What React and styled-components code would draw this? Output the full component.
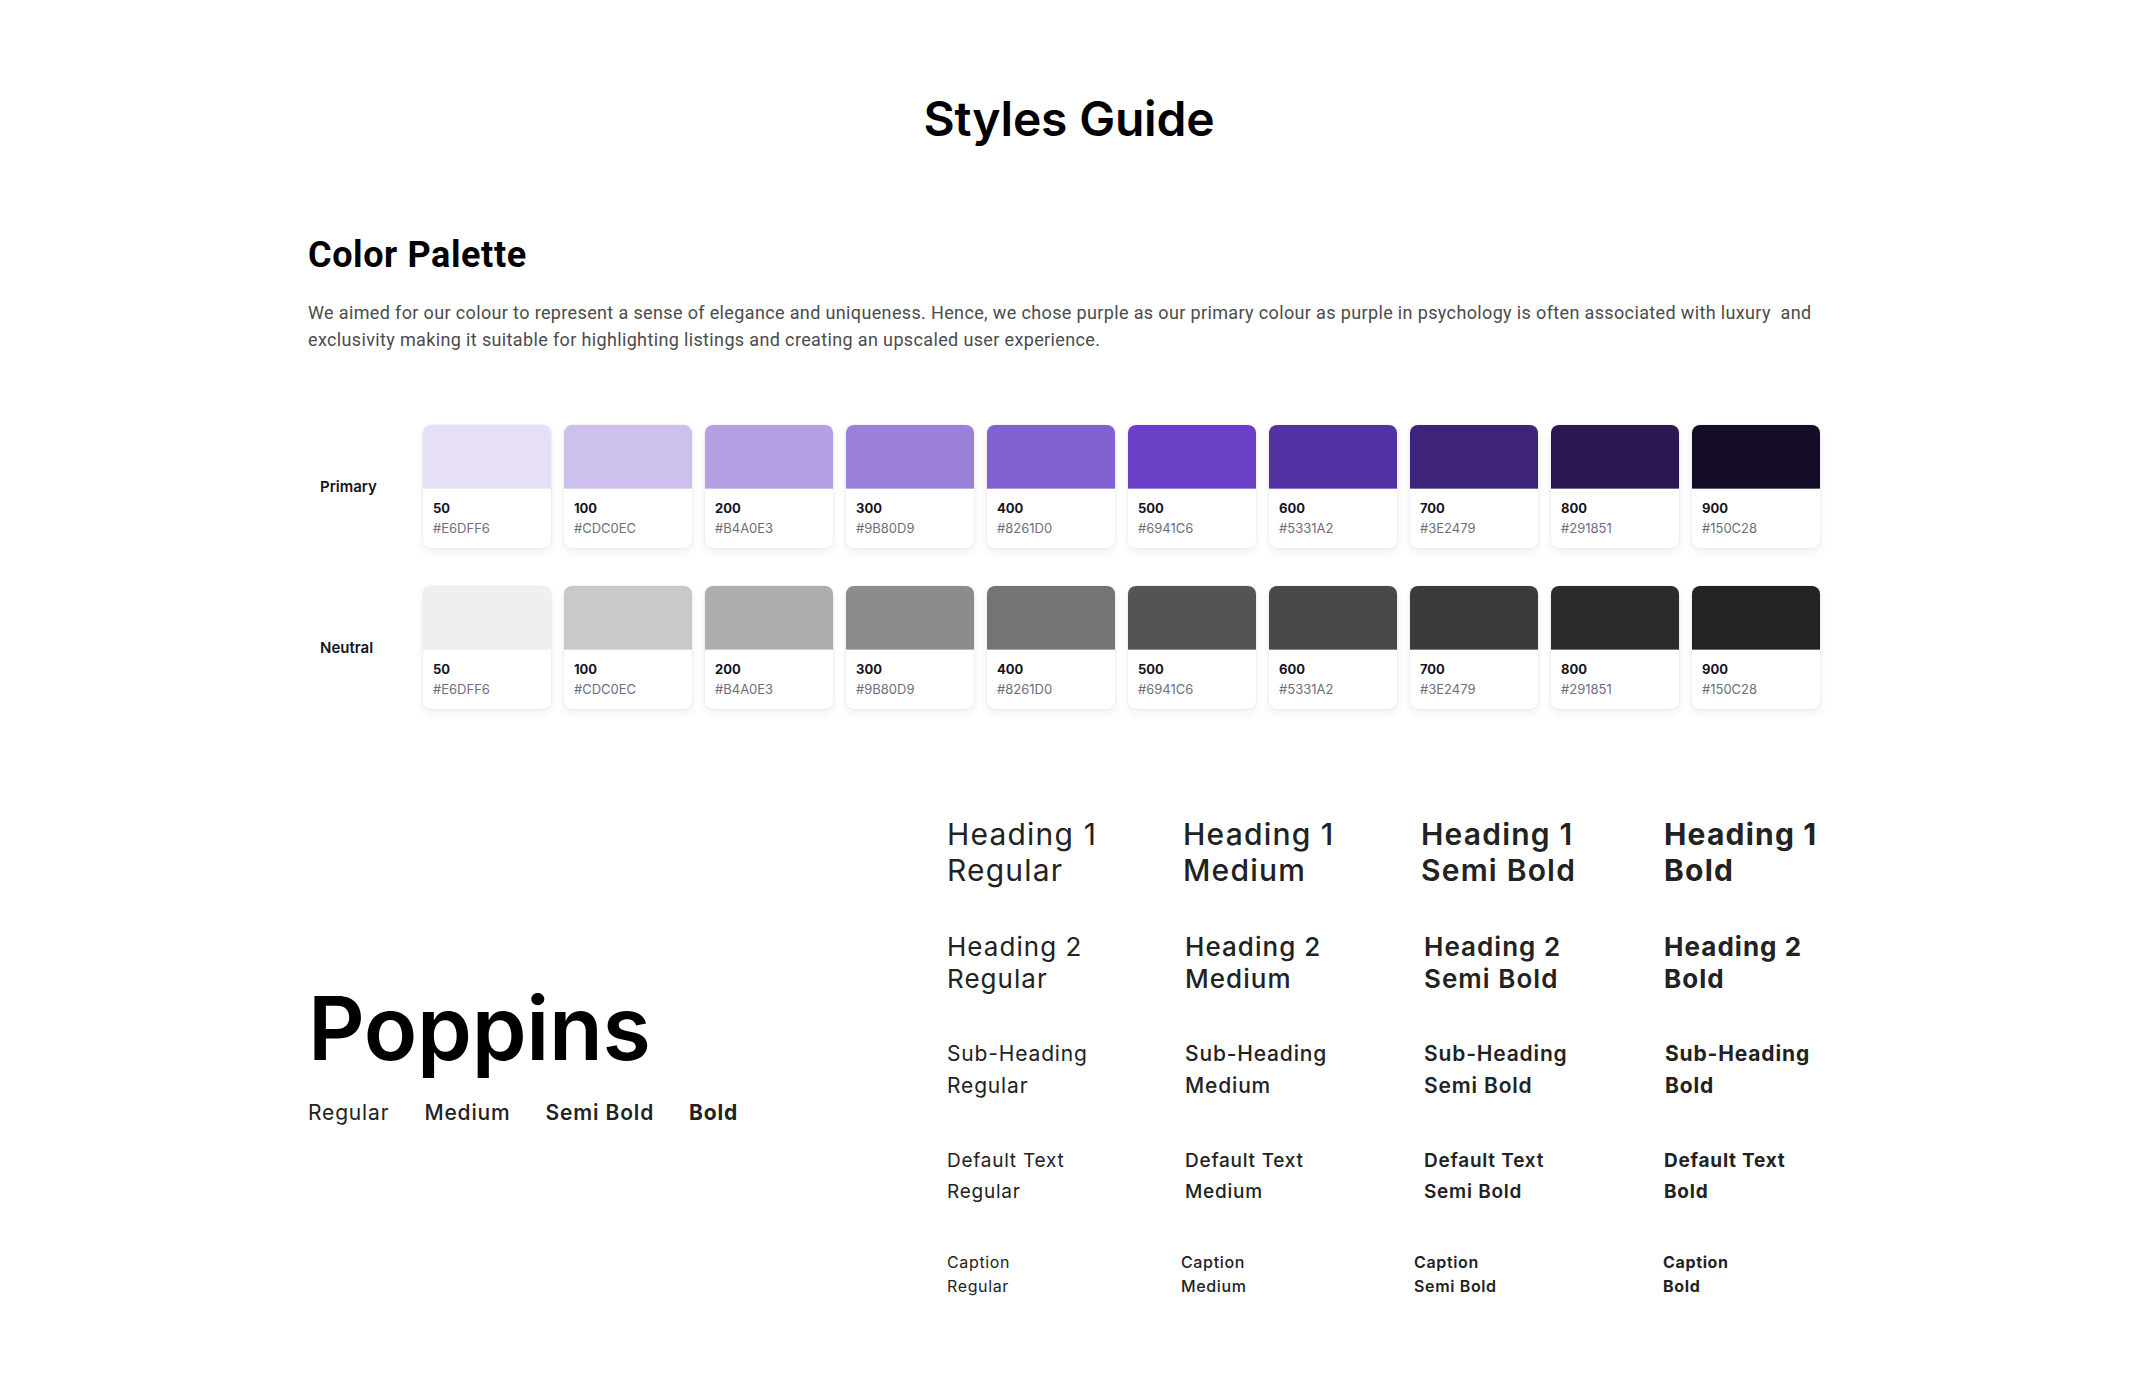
import React from "react";
import styled, { createGlobalStyle } from "styled-components";

const Global = createGlobalStyle`
  html, body { margin: 0; padding: 0; background: #ffffff; }
  body { font-family: "Inter", "Roboto", sans-serif; -webkit-font-smoothing: antialiased; }
  * { box-sizing: border-box; }
`;

const Page = styled.div`
  width: 2138px;
  min-height: 1397px;
  padding-top: 90px;
  padding-bottom: 100px;
`;

const Title = styled.h1`
  margin: 0;
  text-align: center;
  font-family: "Inter", sans-serif;
  font-weight: 600;
  font-size: 48px;
  line-height: 57.6px;
  color: #000;
  letter-spacing: -0.2px;
`;

const Container = styled.main`
  width: 1512px;
  margin-left: 308px;
`;

const SectionTitle = styled.h2`
  margin: 85px 0 0;
  font-family: "Roboto", sans-serif;
  font-weight: 700;
  font-size: 36px;
  line-height: 44px;
  letter-spacing: 0.6px;
  color: #000;
`;

const Lead = styled.p`
  margin: 22px 0 0;
  font-family: "Roboto", sans-serif;
  font-size: 18px;
  line-height: 27px;
  letter-spacing: 0.36px;
  color: #4b4b4b;
  white-space: nowrap;
`;

const Palette = styled.div`
  margin-top: 72px;
  display: flex;
  flex-direction: column;
  gap: 38px;
`;

const PaletteRow = styled.div`
  display: grid;
  grid-template-columns: 102px repeat(10, 1fr);
  column-gap: 13px;
  align-items: center;
`;

const RowLabel = styled.div`
  padding-left: 12px;
  font-family: "Inter", sans-serif;
  font-weight: 600;
  font-size: 15px;
  color: #14141f;
`;

const Card = styled.div`
  background: #fff;
  border-radius: 8px;
  overflow: hidden;
  box-shadow: 0 0 0 1px rgba(16, 24, 40, 0.035), 0 4px 8px rgba(16, 24, 40, 0.07);
`;

const Swatch = styled.div`
  height: 64px;
  background: ${(p) => p.$color};
  border-bottom: 1px solid rgba(255, 255, 255, 0.35);
`;

const CardBody = styled.div`
  padding: 9px 10px 10px;
  font-family: "Inter", sans-serif;
  font-size: 13px;
  line-height: 20px;
`;

const Step = styled.div`
  font-weight: 700;
  color: #14141f;
`;

const Hex = styled.div`
  font-weight: 400;
  color: #6e6e80;
`;

const Typography = styled.section`
  margin-top: 107px;
  display: flex;
  align-items: flex-start;
`;

const FontShowcase = styled.div`
  width: 639px;
  flex-shrink: 0;
  margin-top: 168px;
`;

const FontName = styled.div`
  font-family: "Inter", sans-serif;
  font-weight: 600;
  font-size: 88px;
  line-height: 88px;
  color: #000;
  letter-spacing: -0.3px;
`;

const WeightList = styled.div`
  margin-top: 27px;
  display: flex;
  gap: 35px;
`;

const WeightName = styled.span`
  font-family: "Inter", sans-serif;
  font-size: 21px;
  line-height: 28px;
  letter-spacing: 0.04em;
  font-weight: ${(p) => p.$weight};
  color: #222;
`;

const Scale = styled.div`
  display: grid;
  grid-template-columns: 238px 239px 240px auto;
  row-gap: 43px;
`;

const Sample = styled.div`
  margin-left: ${(p) => p.$shift || 0}px;
  font-family: "Inter", sans-serif;
  font-size: ${(p) => p.$size}px;
  line-height: ${(p) => p.$lh}px;
  font-weight: ${(p) => p.$weight};
  letter-spacing: 0.04em;
  color: #222;
`;

const primary = [
  ["50", "#E6DFF6", "#E6DFF6"],
  ["100", "#CDC0EC", "#CDC0EC"],
  ["200", "#B4A0E3", "#B4A0E3"],
  ["300", "#9B80D9", "#9B80D9"],
  ["400", "#8261D0", "#8261D0"],
  ["500", "#6941C6", "#6941C6"],
  ["600", "#5331A2", "#5331A2"],
  ["700", "#3E2479", "#3E2479"],
  ["800", "#291851", "#291851"],
  ["900", "#150C28", "#150C28"],
];

const neutralFills = [
  "#EFEFEF",
  "#C9C9C9",
  "#ADADAD",
  "#8C8C8C",
  "#747474",
  "#545454",
  "#484848",
  "#3A3B3A",
  "#2B2B2B",
  "#232323",
];

const neutral = primary.map(([step, hex], i) => [step, hex, neutralFills[i]]);

const weights = [
  ["Regular", 400],
  ["Medium", 500],
  ["Semi Bold", 600],
  ["Bold", 700],
];

const styles = [
  ["Heading 1", 30, 36, [0, -2, -3, 0]],
  ["Heading 2", 26, 32, [0, 0, 0, 0]],
  ["Sub-Heading", 21, 32, [0, 0, 0, 1]],
  ["Default Text", 19, 31, [0, 0, 0, 0]],
  ["Caption", 16, 24, [0, -4, -10, -1]],
];

function Row({ label, items }) {
  return (
    <PaletteRow>
      <RowLabel>{label}</RowLabel>
      {items.map(([step, hex, fill]) => (
        <Card key={step}>
          <Swatch $color={fill} />
          <CardBody>
            <Step>{step}</Step>
            <Hex>{hex}</Hex>
          </CardBody>
        </Card>
      ))}
    </PaletteRow>
  );
}

export default function App() {
  return (
    <>
      <Global />
      <Page>
        <Title>Styles Guide</Title>
        <Container>
          <SectionTitle>Color Palette</SectionTitle>
          <Lead>
            We aimed for our colour to represent a sense of elegance and uniqueness. Hence, we chose purple as our primary colour as purple in psychology is often associated with luxury&nbsp; and
            <br />
            exclusivity making it suitable for highlighting listings and creating an upscaled user experience.
          </Lead>
          <Palette>
            <Row label="Primary" items={primary} />
            <Row label="Neutral" items={neutral} />
          </Palette>
          <Typography>
            <FontShowcase>
              <FontName>Poppins</FontName>
              <WeightList>
                {weights.map(([name, w]) => (
                  <WeightName key={name} $weight={w}>
                    {name}
                  </WeightName>
                ))}
              </WeightList>
            </FontShowcase>
            <Scale>
              {styles.map(([name, size, lh, shifts]) =>
                weights.map(([wName, w], i) => (
                  <Sample key={name + wName} $size={size} $lh={lh} $weight={w} $shift={shifts[i]}>
                    {name}
                    <br />
                    {wName}
                  </Sample>
                ))
              )}
            </Scale>
          </Typography>
        </Container>
      </Page>
    </>
  );
}
